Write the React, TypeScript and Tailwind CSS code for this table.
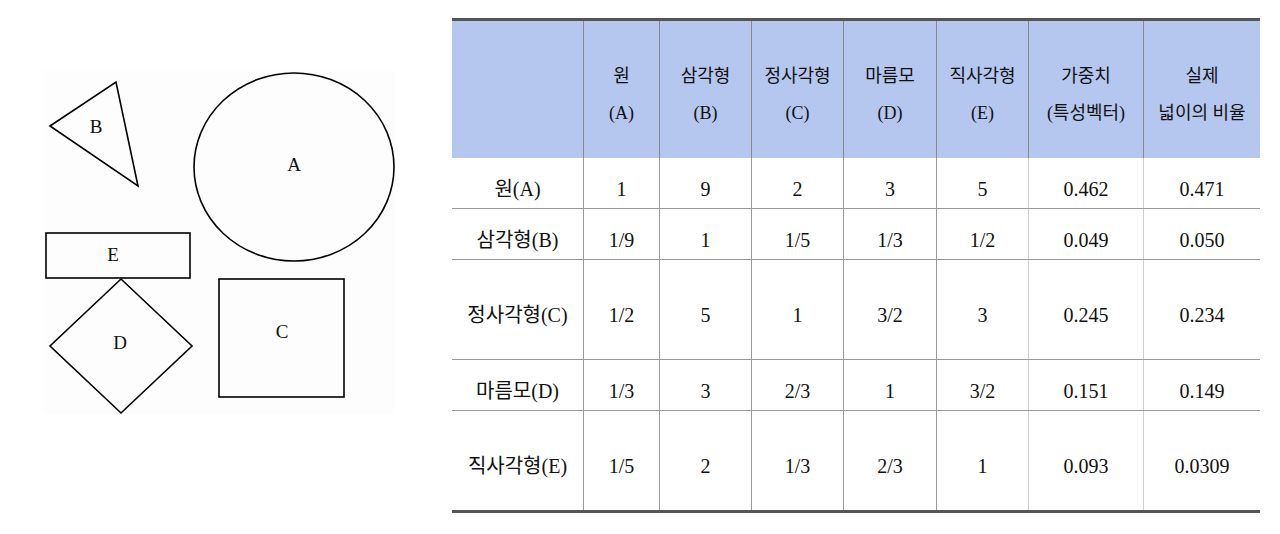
const serif = { fontFamily: '"Liberation Serif", "Noto Sans CJK KR", serif' };

const cols = [
  'w-[132px]',
  'w-[76px]',
  'w-[92px]',
  'w-[92px]',
  'w-[93px]',
  'w-[92px]',
  'w-[115px]',
  'w-[116px]',
];

const header: [string, string][] = [
  ['', ''],
  ['원', '(A)'],
  ['삼각형', '(B)'],
  ['정사각형', '(C)'],
  ['마름모', '(D)'],
  ['직사각형', '(E)'],
  ['가중치', '(특성벡터)'],
  ['실제', '넓이의 비율'],
];

const rows: { h: string; cells: string[] }[] = [
  { h: 'h-[51px]', cells: ['원(A)', '1', '9', '2', '3', '5', '0.462', '0.471'] },
  { h: 'h-[51px]', cells: ['삼각형(B)', '1/9', '1', '1/5', '1/3', '1/2', '0.049', '0.050'] },
  { h: 'h-[100px]', cells: ['정사각형(C)', '1/2', '5', '1', '3/2', '3', '0.245', '0.234'] },
  { h: 'h-[51px]', cells: ['마름모(D)', '1/3', '3', '2/3', '1', '3/2', '0.151', '0.149'] },
  { h: 'h-[99px]', cells: ['직사각형(E)', '1/5', '2', '1/3', '2/3', '1', '0.093', '0.0309'] },
];

function Shapes() {
  return (
    <svg width="452" height="534" viewBox="0 0 452 534" className="block">
      <rect x="44" y="70" width="351" height="344" fill="#fdfdfd" />
      <g fill="none" stroke="#000" strokeWidth="1.6">
        <polygon points="50,126 116,82 138,186" />
        <ellipse cx="294" cy="167" rx="100" ry="94" />
        <rect x="46" y="233" width="144" height="45" />
        <polygon points="121,279 192,346 121,413 50,346" />
        <rect x="219" y="279" width="125" height="118" />
      </g>
      <g fontSize="19" fill="#111" textAnchor="middle" style={serif}>
        <text x="96" y="133">B</text>
        <text x="294" y="171">A</text>
        <text x="113" y="261">E</text>
        <text x="120" y="349">D</text>
        <text x="282" y="338">C</text>
      </g>
    </svg>
  );
}

export default function App() {
  return (
    <div className="w-[1280px] h-[534px] bg-white flex overflow-hidden text-[#111]" style={serif}>
      <Shapes />
      <div className="mt-[18px] w-[808px] h-fit border-t-[3px] border-b-[3px] border-[#555]">
        <div className="flex h-[137px] bg-[#b5c6ef] text-[18px]">
          {header.map((h, i) => (
            <div
              key={i}
              className={`${cols[i]} ${i < 7 ? 'border-r border-[#8a8a8a]' : ''} flex flex-col items-center justify-center pt-[10px] leading-[37px]`}
            >
              <span>{h[0]}</span>
              <span>{h[1]}</span>
            </div>
          ))}
        </div>
        {rows.map((r, ri) => (
          <div key={ri} className={`flex ${r.h} ${ri < rows.length - 1 ? 'border-b border-[#9a9a9a]' : ''} text-[20px]`}>
            {r.cells.map((c, i) => (
              <div
                key={i}
                className={`${cols[i]} ${i < 7 ? (i >= 5 ? 'border-r border-[#cfcfcf]' : 'border-r border-[#9a9a9a]') : ''} flex items-center justify-center pt-[11px]`}
              >
                {c}
              </div>
            ))}
          </div>
        ))}
      </div>
    </div>
  );
}
